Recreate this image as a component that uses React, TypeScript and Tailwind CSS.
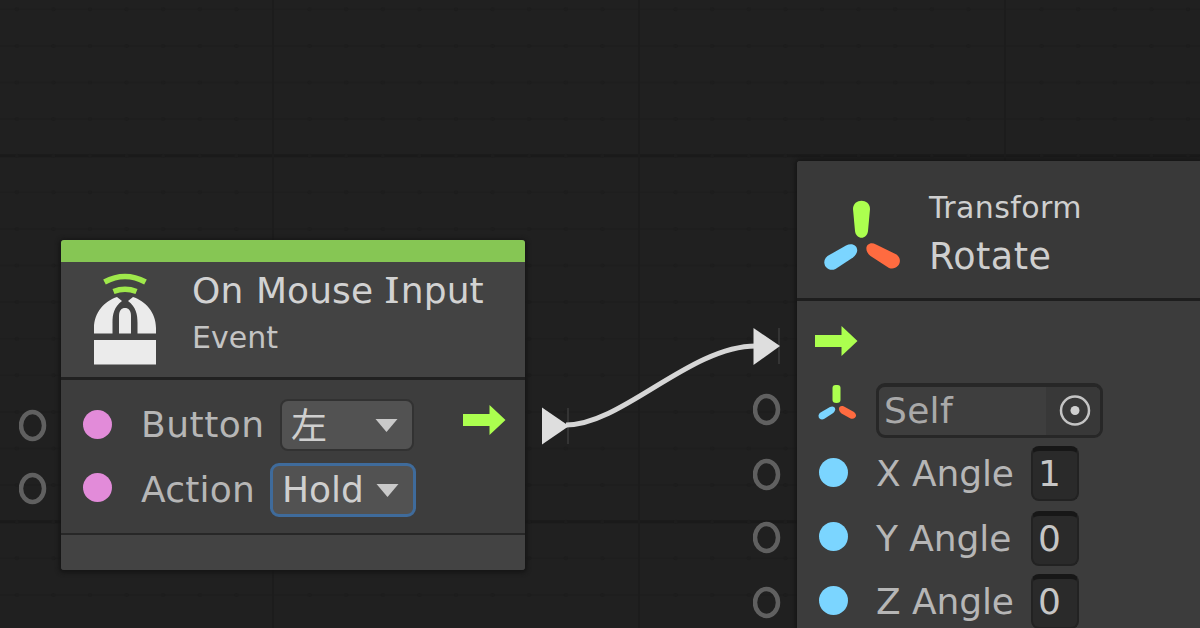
import { ReactNode } from "react";

const GRID_STEP = 36.6;

const columns = Array.from({ length: 33 }, (_, i) => ({
  x: 16.8 + i * GRID_STEP,
  major: i % 10 === 7,
}));

const rows = Array.from({ length: 17 }, (_, i) => ({
  y: 9.3 + i * GRID_STEP,
  major: i % 10 === 4,
}));

const Grid = () => (
  <svg className="absolute inset-0" width="1200" height="628">
    {rows.map(({ y, major }) => (
      <line
        key={y}
        x1="0"
        x2="1200"
        y1={y}
        y2={y}
        stroke={major ? "#1a1a1a" : "#1e1e1e"}
        strokeWidth={major ? 3 : 1.5}
      />
    ))}
    {columns.map(({ x, major }) =>
      major ? (
        <line
          key={x}
          x1={x}
          x2={x}
          y1="0"
          y2="628"
          stroke="#1c1c1c"
          strokeWidth="2"
        />
      ) : (
        rows.map(({ y }) => (
          <circle key={`${x}-${y}`} cx={x} cy={y} r="2" fill="#1d1d1d" />
        ))
      )
    )}
  </svg>
);

const Connection = () => (
  <svg className="absolute inset-0" width="1200" height="628">
    <path d="M568 408V444M779 328V364" stroke="#343434" strokeWidth="2" />
    <path
      d="M566 425C622 425 690 346 756 346"
      fill="none"
      stroke="#d6d6d6"
      strokeWidth="5"
    />
    <path d="M542 407.500L569 426L542 444.500Z" fill="#dedede" />
    <path d="M753.500 328L780 346L753.500 365Z" fill="#dedede" />
  </svg>
);

const Port = ({ className }: { className: string }) => (
  <svg className={`absolute ${className}`} width="28" height="34">
    <ellipse
      cx="13.500"
      cy="16.500"
      rx="11.500"
      ry="13.500"
      fill="none"
      stroke="#606060"
      strokeWidth="4.500"
    />
  </svg>
);

const FlowArrow = ({ className }: { className?: string }) => (
  <svg className={className} width="44" height="32" viewBox="0 0 44 32">
    <path
      d="M1 10H27.500V1L43.500 16L27.500 31V22H1Z"
      fill="#acff4f"
    />
  </svg>
);

const MouseIcon = () => (
  <svg width="64" height="94" viewBox="0 0 64 94">
    <path
      d="M11.500 9Q32 -2 52.500 9M20.500 18.500Q32 14 43.500 18.500"
      fill="none"
      stroke="#9fe84b"
      strokeWidth="5.500"
    />
    <path
      d="M1 60.500V55C1 39 12 28 24 24L29 28C21 34 19.500 41 19.500 50V60.500Z"
      fill="#ebebeb"
    />
    <path
      d="M63 60.500V55C63 39 52 28 40 24L35 28C43 34 44.500 41 44.500 50V60.500Z"
      fill="#ebebeb"
    />
    <path
      d="M26 60.500V43C26 37.500 28.500 35 32 35S38 37.500 38 43V60.500Z"
      fill="#ebebeb"
    />
    <path d="M1 67H63V91.500H1Z" fill="#ebebeb" />
  </svg>
);

const TransformIcon = ({ size }: { size: "large" | "small" }) =>
  size === "large" ? (
    <svg width="78" height="72" viewBox="0 0 78 72">
      <path
        d="M30 9C30 -2 47 -2 47 9L45 31C44 40 33 40 32 31Z"
        fill="#acff4f"
      />
      <path
        d="M23 45.500L4.500 56C-3 62 4 73 12.500 69L30 57.500C39 50 32 41 23 45.500Z"
        fill="#7bd5ff"
      />
      <path
        d="M53 44.500L73.500 54.500C81 60 75 71 66 68L47.500 56C39 49 45 40 53 44.500Z"
        fill="#ff6b40"
      />
    </svg>
  ) : (
    <svg width="39" height="35" viewBox="0 0 39 35">
      <path
        d="M14.500 3Q14.500 0 17.500 0H19.500Q22.500 0 22.500 3V15Q22.500 18 18.500 18Q14.500 18 14.500 15Z"
        fill="#acff4f"
      />
      <path
        d="M12 22L2.500 27.500C-2 31 2 36 6 34L14.500 28.500C20 24 16 20 12 22Z"
        fill="#7bd5ff"
      />
      <path
        d="M26 21.500L36 27C40.500 31 36.500 35 32.500 33.500L23.500 28.500C18.500 24 21.500 19.500 26 21.500Z"
        fill="#ff6b40"
      />
    </svg>
  );

const Caret = () => (
  <svg width="23" height="15" viewBox="0 0 23 15">
    <path d="M0.500 1H22.500L11.500 14Z" fill="#c9c9c9" />
  </svg>
);

const Dot = ({ className }: { className: string }) => (
  <span className={`size-[29px] shrink-0 rounded-full ${className}`} />
);

const NumberField = ({ children }: { children: ReactNode }) => (
  <div className="flex h-[55px] w-12 items-center rounded-lg border-2 border-t-5 border-[#222222] border-t-[#171717] bg-[#2a2a2a] pb-[2px] pl-[5px] text-[#c6c6c6]">
    {children}
  </div>
);

const angles = [
  { axis: "X", value: 1, row: "mt-2", dot: "-mt-[2px]" },
  { axis: "Y", value: 0, row: "mt-[10px]", dot: "-mt-[5px]" },
  { axis: "Z", value: 0, row: "mt-2", dot: "-mt-[2px]" },
];

const MouseInputNode = () => (
  <section className="absolute left-[61px] top-[240px] flex h-[330px] w-[464px] flex-col overflow-hidden rounded-[3px] bg-[#3d3d3d] shadow-[0_1px_4px_2px_#151515]">
    <div className="h-[22px] bg-[#86c654]" />
    <header className="flex h-[118px] border-b-3 border-[#212121] bg-[#434343] pl-8">
      <div className="pt-[11px]">
        <MouseIcon />
      </div>
      <div className="ml-[35px] pt-[5px]">
        <h2 className="whitespace-nowrap leading-[47px] tracking-[0.1px] text-[#d2d2d2]">
          On<span className="pl-[1px]"> </span>Mouse{" "}
          <span className="ml-[1px] inline-block w-[15px] scale-x-125 font-['Noto_Sans'] leading-none">
            I
          </span>
          nput
        </h2>
        <p className="text-[30px] leading-[47px] text-[#c4c4c4]">Event</p>
      </div>
    </header>
    <div className="h-[153px] pl-[22px] pt-5">
      <div className="flex h-[50px] items-center">
        <Dot className="-mt-[2px] bg-[#e28bd9]" />
        <span className="ml-[29px] w-[140px] tracking-[0.5px] text-[#b6b6b6]">
          Button
        </span>
        <div className="-ml-[1px] flex h-[52px] w-[134px] shrink-0 items-center justify-between rounded-lg border-2 border-[#323232] bg-[#525252] pl-[9px] pr-[14px] text-[#cfcfcf]">
          <span
            lang="ja"
            className="-mt-1 font-['Noto_Sans_CJK_JP',sans-serif] leading-none"
          >
            左
          </span>
          <Caret />
        </div>
        <FlowArrow className="-mt-[10px] ml-[48px] shrink-0" />
      </div>
      <div className="mt-[13px] flex h-[54px] items-center">
        <Dot className="-mt-[6px] bg-[#e28bd9]" />
        <span className="ml-[29px] w-[130px] tracking-[0.2px] text-[#b6b6b6]">
          Action
        </span>
        <div className="-ml-[1px] flex h-[54px] w-[146px] shrink-0 items-center justify-between rounded-[9px] border-3 border-[#3f6b9b] bg-[#525252] pl-[9px] pr-[14px] text-[#cfcfcf]">
          <span>Hold</span>
          <Caret />
        </div>
      </div>
    </div>
    <footer className="grow border-t-2 border-[#272727] bg-[#434343]" />
  </section>
);

const RotateNode = () => (
  <section className="absolute left-[797px] top-[161px] flex h-[467px] w-[403px] flex-col overflow-hidden rounded-tl-[3px] bg-[#3c3c3c] shadow-[0_0_4px_2px_#151515]">
    <header className="flex h-[140px] shrink-0 border-b-3 border-[#1e1e1e] bg-[#393939] pl-[26px]">
      <div className="pt-[39px]">
        <TransformIcon size="large" />
      </div>
      <div className="ml-[28px] pt-[23px] text-[#cfcfcf]">
        <p className="text-[30px] leading-[48px] tracking-[0.4px]">
          Transform
        </p>
        <h2 className="text-[36.5px] leading-[49px] tracking-[0.5px]">
          Rotate
        </h2>
      </div>
    </header>
    <div className="pl-[17px] pt-6">
      <FlowArrow />
      <div className="mt-[26px] flex h-[55px] items-center">
        <div className="-mt-[16px] ml-1 w-[39px] shrink-0">
          <TransformIcon size="small" />
        </div>
        <div className="ml-[19px] flex h-[55px] w-[227px] shrink-0 overflow-hidden rounded-[9px] border-3 border-t-4 border-[#272727] bg-[#3e3e3e]">
          <span className="grow pl-[5px] leading-[47px] tracking-[0.3px] text-[#a9a9a9]">
            Self
          </span>
          <span className="flex w-[54px] items-center justify-center bg-[#383838]">
            <svg width="36" height="32">
              <circle
                cx="20"
                cy="15.500"
                r="14"
                fill="none"
                stroke="#c4c4c4"
                strokeWidth="2.500"
              />
              <circle cx="20" cy="15.500" r="4.500" fill="#cfcfcf" />
            </svg>
          </span>
        </div>
      </div>
      {angles.map(({ axis, value, row, dot }) => (
        <div key={axis} className={`flex h-[55px] items-center ${row}`}>
          <Dot className={`ml-[5px] bg-[#7bd5ff] ${dot}`} />
          <span className="ml-[28px] w-[155px] whitespace-nowrap tracking-[-0.1px] text-[#b6b6b6]">
            {axis} Angle
          </span>
          <NumberField>{value}</NumberField>
        </div>
      ))}
    </div>
  </section>
);

const App = () => {
  return (
    <main className="relative h-[628px] w-[1200px] overflow-hidden bg-[#202020] font-['DejaVu_Sans','Noto_Sans_CJK_JP',sans-serif] text-[36px] leading-none">
      <Grid />
      <MouseInputNode />
      <RotateNode />
      <Connection />
      <Port className="left-[19px] top-[409px]" />
      <Port className="left-[19px] top-[472px]" />
      <Port className="left-[753px] top-[393px]" />
      <Port className="left-[753px] top-[458px]" />
      <Port className="left-[753px] top-[521px]" />
      <Port className="left-[753px] top-[586px]" />
    </main>
  );
};

export default App;
